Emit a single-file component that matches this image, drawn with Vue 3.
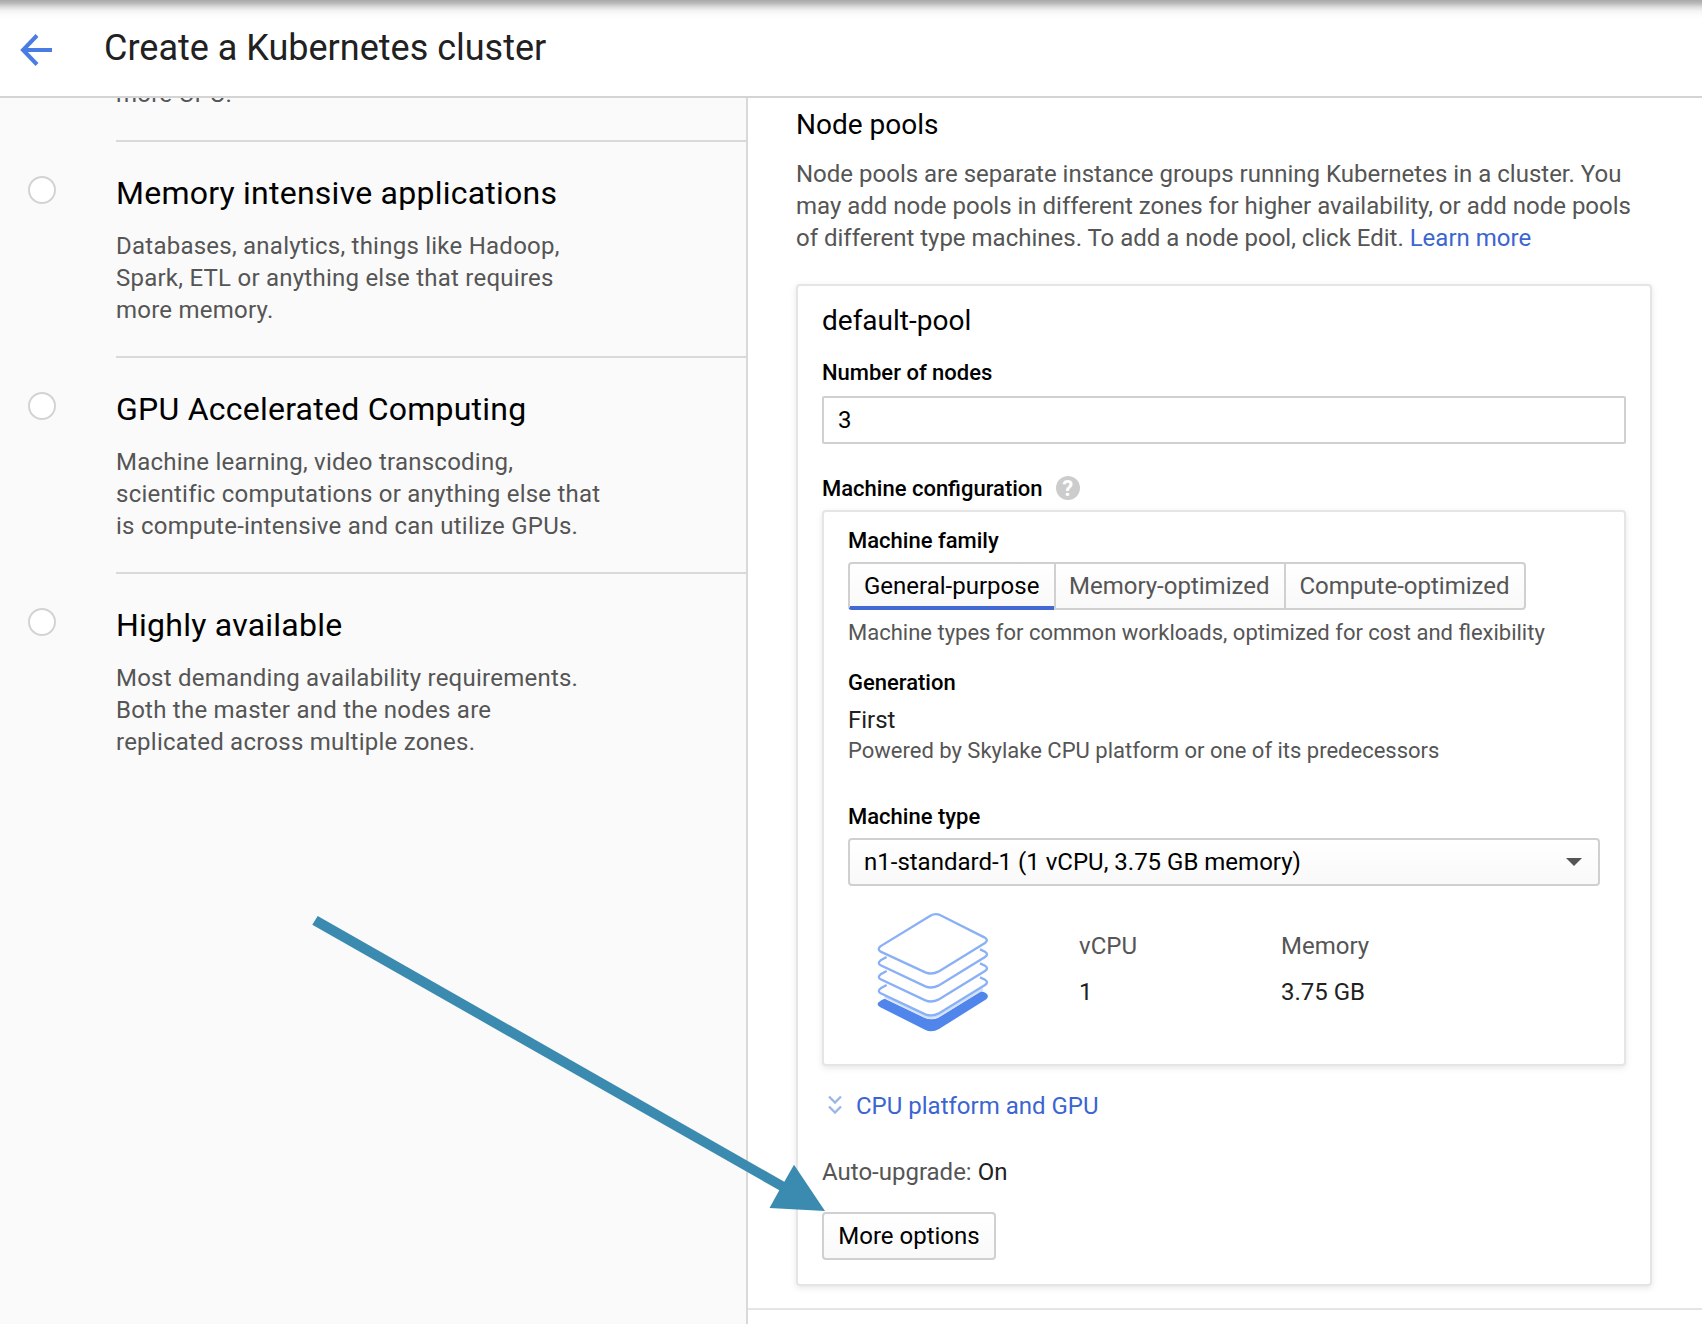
<script setup>
const options = [
  {
    title: 'Memory intensive applications',
    lines: ['Databases, analytics, things like Hadoop,', 'Spark, ETL or anything else that requires', 'more memory.'],
  },
  {
    title: 'GPU Accelerated Computing',
    lines: ['Machine learning, video transcoding,', 'scientific computations or anything else that', 'is compute-intensive and can utilize GPUs.'],
  },
  {
    title: 'Highly available',
    lines: ['Most demanding availability requirements.', 'Both the master and the nodes are', 'replicated across multiple zones.'],
  },
]
const families = ['General-purpose', 'Memory-optimized', 'Compute-optimized']
</script>

<template>
  <div class="page">
    <header class="header">
      <svg class="back" width="32" height="32" viewBox="0 0 32 32">
        <path d="M17 1.500 3 16l14 14.500M3 16H32" fill="none" stroke="#4a7de2" stroke-width="4" />
      </svg>
      <h1>Create a Kubernetes cluster</h1>
    </header>

    <div class="body">
      <aside class="sidebar">
        <div class="option clipped">
          <span class="radio-space"></span>
          <div class="option-main"><p>more CPU.</p></div>
        </div>
        <div v-for="o in options" :key="o.title" class="option">
          <span class="radio"></span>
          <div class="option-main">
            <h2>{{ o.title }}</h2>
            <p v-for="l in o.lines" :key="l">{{ l }}</p>
          </div>
        </div>
      </aside>

      <main class="content">
        <section class="pools">
          <h3>Node pools</h3>
          <div class="intro">
            <p>Node pools are separate instance groups running Kubernetes in a cluster. You</p>
            <p>may add node pools in different zones for higher availability, or add node pools</p>
            <p>of different type machines. To add a node pool, click Edit. <a>Learn more</a></p>
          </div>

          <div class="card pool">
            <h3>default-pool</h3>
            <label class="lbl nodes-label">Number of nodes</label>
            <div class="field">3</div>
            <div class="config-head">
              <label class="lbl">Machine configuration</label>
              <span class="help">?</span>
            </div>

            <div class="card machine">
              <label class="lbl">Machine family</label>
              <div class="segments">
                <button v-for="(f, i) in families" :key="f" :class="{ active: i === 0 }">{{ f }}</button>
              </div>
              <p class="hint">Machine types for common workloads, optimized for cost and flexibility</p>
              <label class="lbl gen">Generation</label>
              <p class="first">First</p>
              <p class="hint flush">Powered by Skylake CPU platform or one of its predecessors</p>
              <label class="lbl type">Machine type</label>
              <div class="select">
                <span>n1-standard-1 (1 vCPU, 3.75 GB memory)</span>
                <svg width="16" height="8" viewBox="0 0 16 8"><path d="M0 0h16L8 8z" fill="#555" /></svg>
              </div>
              <div class="specs">
                <svg class="stack" width="114" height="122" viewBox="109 65 342 366">
                  <path d="M135 325 256 383Q276 391 296 382L422 304Q432 303 441 310 449 318 440 327L298 416Q276 428 256 418L122 351Q108 343 118 335 126 327 135 325Z" fill="#5086ec" />
                  <g fill="none" stroke="#8ab0f5" stroke-width="7">
                    <path d="M135 319 257 379Q276 387 296 377L430 296" stroke="#d3e1fb" />
                    <path d="M141 284 123 294Q112 302 123 309L257 372Q276 380 296 370L436 284Q448 275 436 268L421 261" />
                    <path d="M141 242 123 252Q112 260 123 267L257 330Q276 338 296 328L436 242Q448 233 436 226L421 219" />
                    <path d="M141 200 123 210Q112 218 123 225L257 288Q276 296 296 286L436 200Q448 191 436 184L421 177" />
                    <path d="M272 76Q287 68 301 74L434 141Q448 149 436 158L296 244Q276 254 257 246L123 184Q112 177 122 168Z" fill="#fff" />
                  </g>
                </svg>
                <div class="spec cpu"><p>vCPU</p><p class="dark">1</p></div>
                <div class="spec"><p>Memory</p><p class="dark">3.75 GB</p></div>
              </div>
            </div>

            <div class="expander">
              <svg width="14" height="20" viewBox="0 0 14 20">
                <path d="M1 1.500l6 6 6-6M1 11.500l6 6 6-6" fill="none" stroke="#9db6ea" stroke-width="2.400" />
              </svg>
              <a>CPU platform and GPU</a>
            </div>
            <p class="upgrade">Auto-upgrade: <span class="dark">On</span></p>
            <button class="more">More options</button>
          </div>
        </section>
      </main>
    </div>

    <svg class="pointer" width="1702" height="1324" viewBox="0 0 1702 1324">
      <path d="M317.700 916 784.300 1181.700 794 1164.700 825 1211 769.500 1208 779.300 1190.300 312.300 924.700Z" fill="#3b8ab0" />
    </svg>
  </div>
</template>

<style>
body { margin: 0; background: #fff; }
</style>

<style scoped>
* { box-sizing: border-box; }
h1, h2, h3, p { margin: 0; font-weight: 400; white-space: nowrap; }
.page {
  position: relative;
  width: 1702px;
  height: 1324px;
  overflow: hidden;
  display: flex;
  flex-direction: column;
  font: 24px/32px Roboto, sans-serif;
  color: #555;
  background: #fff;
}
.header {
  flex: none;
  height: 98px;
  display: flex;
  align-items: flex-start;
  padding-left: 20px;
  border-bottom: 2px solid #d4d4d4;
  background: linear-gradient(#a9a9a9 0, #b8b8b8 3px, #dcdcdc 7px, #f4f4f4 11px, #fcfcfc 15px, #fff 20px);
}
.back { margin-top: 34px; }
h1 { margin: 26px 0 0 52px; font-size: 36px; line-height: 44px; color: #212121; }
.body { flex: 1; min-height: 0; display: flex; }
.sidebar {
  flex: none;
  width: 748px;
  background: #fafafa;
  border-right: 2px solid #d9d9d9;
  overflow: hidden;
  letter-spacing: .24px;
}
.option { display: flex; height: 216px; }
.option-main { flex: 1; margin-left: 60px; padding-top: 31px; border-bottom: 2px solid #d9d9d9; }
.option:last-child .option-main { border-bottom: 0; }
.option.clipped { height: 44px; }
.radio-space { width: 28px; margin-left: 28px; }
.clipped .option-main { padding-top: 0; }
.clipped p { margin-top: -20px; }
.radio {
  width: 28px;
  height: 28px;
  margin: 34px 0 0 28px;
  border: 2px solid #d3d3d3;
  border-radius: 50%;
  background: #fff;
}
h2 { font-size: 32px; line-height: 40px; margin-bottom: 17px; color: #000; }
.content { flex: 1; }
.pools { height: 1212px; padding: 9px 50px 0 48px; border-bottom: 2px solid #e5e5e5; }
h3 { font-size: 28px; line-height: 36px; color: #000; }
.intro { margin-top: 15px; }
a { color: #3b65d1; }
.card {
  border: 2px solid #e5e5e5;
  border-radius: 4px;
  background: #fff;
  box-shadow: 0 2px 6px rgba(0, 0, 0, .1);
}
.pool { height: 1002px; margin-top: 30px; padding: 17px 24px 0; }
.lbl { display: block; font-size: 22px; line-height: 28px; font-weight: 500; color: #000; white-space: nowrap; }
.nodes-label { margin: 20px 0 9px; }
.field { height: 48px; padding: 6px 14px; border: 2px solid #d0d0d0; border-radius: 2px; color: #000; }
.config-head { display: flex; margin-top: 31px; align-items: flex-start; }
.help {
  width: 24px;
  height: 24px;
  margin: 1px 0 0 13px;
  border-radius: 50%;
  background: #ccc;
  color: #fff;
  font-size: 22px;
  line-height: 25px;
  font-weight: 700;
  text-align: center;
}
.machine { height: 556px; margin-top: 7px; padding: 15px 24px 0; }
.segments { display: flex; margin-top: 7px; width: 678px; }
button { font: inherit; letter-spacing: inherit; padding: 0; white-space: nowrap; }
.segments button {
  height: 48px;
  width: 232px;
  margin-right: -2px;
  padding-left: 13px;
  text-align: left;
  border: 2px solid #d0d0d0;
  background: linear-gradient(#fff, #f9f9f9);
  color: #555;
}
.segments button:first-child { width: 208px; padding-left: 14px; border-radius: 4px 0 0 4px; }
.segments button:last-child { width: 242px; margin-right: 0; padding-left: 13.5px; border-radius: 0 4px 4px 0; }
.segments .active { color: #000; border-bottom: 4px solid #4168d3; padding-top: 2px; }
.hint { margin-top: 9px; font-size: 22px; line-height: 28px; }
.flush { margin-top: 1px; }
.gen { margin-top: 22px; }
.first { margin-top: 7px; color: #212121; }
.type { margin-top: 38px; }
.select {
  height: 48px;
  display: flex;
  align-items: center;
  justify-content: space-between;
  margin-top: 7px;
  padding: 0 16px 0 14px;
  border: 2px solid #d0d0d0;
  border-radius: 4px;
  color: #000;
  background: linear-gradient(#fff, #f9f9f9);
}
.specs { display: flex; align-items: flex-start; }
.stack { margin: 26px 0 0 28px; }
.spec { margin-top: 44px; }
.cpu { width: 202px; margin-left: 89px; }
.dark { color: #212121; }
.spec .dark { margin-top: 14px; }
.expander { display: flex; align-items: center; gap: 14px; margin: 24px 0 0 6px; }
.expander svg { margin-top: -2px; }
.upgrade { margin-top: 34px; }
.more {
  width: 174px;
  height: 48px;
  margin-top: 24px;
  border: 2px solid #d0d0d0;
  border-radius: 4px;
  color: #000;
  background: linear-gradient(#fff, #f9f9f9);
}
.pointer { position: absolute; left: 0; top: 0; pointer-events: none; }
</style>
